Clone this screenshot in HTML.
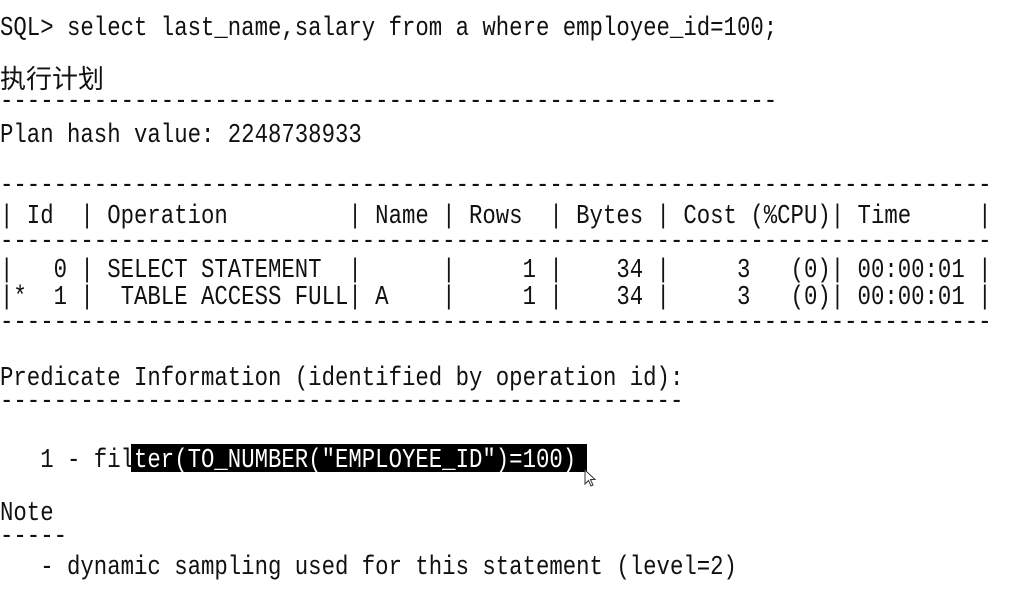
<!DOCTYPE html>
<html><head><meta charset="utf-8"><style>
html,body{margin:0;padding:0;background:#fff;}
body{width:1009px;height:590px;position:relative;overflow:hidden;}
.l{position:absolute;left:0;white-space:pre;font-family:"Liberation Mono","Noto Sans CJK SC",monospace;font-size:22.33px;line-height:26px;height:26px;color:#111;transform:scaleY(1.2);transform-origin:0 50%;}
.cjk{font-family:"Noto Sans CJK SC","WenQuanYi Zen Hei",sans-serif;font-size:26px;line-height:30px;height:30px;transform:none;}
</style></head><body>
<div class="l" style="top:15px">SQL&gt; select last_name,salary from a where employee_id=100;</div>
<div class="l cjk" style="top:63px">执行计划</div>
<div class="l" style="top:88px">----------------------------------------------------------</div>
<div class="l" style="top:122px">Plan hash value: 2248738933</div>
<div class="l" style="top:172px">--------------------------------------------------------------------------</div>
<div class="l" style="top:203px">| Id  | Operation         | Name | Rows  | Bytes | Cost (%CPU)| Time     |</div>
<div class="l" style="top:228px">--------------------------------------------------------------------------</div>
<div class="l" style="top:257px">|   0 | SELECT STATEMENT  |      |     1 |    34 |     3   (0)| 00:00:01 |</div>
<div class="l" style="top:284px">|*  1 |  TABLE ACCESS FULL| A    |     1 |    34 |     3   (0)| 00:00:01 |</div>
<div class="l" style="top:309px">--------------------------------------------------------------------------</div>
<div class="l" style="top:365px">Predicate Information (identified by operation id):</div>
<div class="l" style="top:388px">---------------------------------------------------</div>
<div style="position:absolute;left:131px;top:444px;width:456px;height:28px;background:#000"></div>
<div class="l" style="top:447px">   1 - fil<span style="color:#fff">ter(TO_NUMBER("EMPLOYEE_ID")=100) </span></div>
<svg style="position:absolute;left:584px;top:469px" width="14" height="20" viewBox="0 0 14 20"><path d="M1 1 L1 15 L4.5 11.5 L7 17 L9 16 L6.5 10.5 L11 10.5 Z" fill="#fff" stroke="#333" stroke-width="1"/></svg>
<div class="l" style="top:500px">Note</div>
<div class="l" style="top:523px">-----</div>
<div class="l" style="top:554px">   - dynamic sampling used for this statement (level=2)</div>
</body></html>
